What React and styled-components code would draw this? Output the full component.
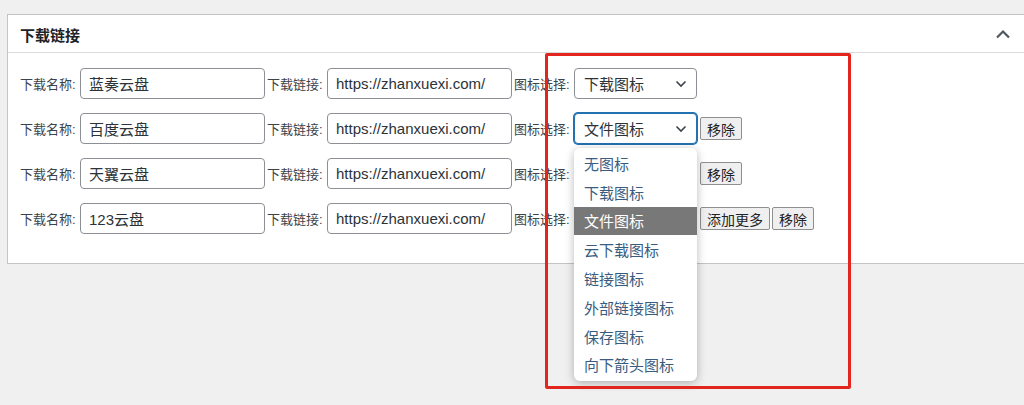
import React from "react";
import styled, { createGlobalStyle } from "styled-components";

const GlobalStyle = createGlobalStyle`
  html, body {
    margin: 0;
    padding: 0;
    background: #f0f0f1;
    overflow: hidden;
  }
  body {
    font-family: "Liberation Sans", "Noto Sans CJK SC", sans-serif;
    color: #3c434a;
  }
`;

const rows = [
  { name: "蓝奏云盘", icon: "下载图标", buttons: [] },
  { name: "百度云盘", icon: "文件图标", buttons: ["移除"], open: true },
  { name: "天翼云盘", icon: "下载图标", buttons: ["移除"], covered: true },
  { name: "123云盘", icon: "下载图标", buttons: ["添加更多", "移除"], covered: true },
];

const options = [
  "无图标",
  "下载图标",
  "文件图标",
  "云下载图标",
  "链接图标",
  "外部链接图标",
  "保存图标",
  "向下箭头图标",
];

const App = () => {
  return (
    <Page>
      <GlobalStyle />
      <Panel>
        <PanelHeader>
          <Title>下载链接</Title>
          <Toggle>
            <svg width="16" height="10" viewBox="0 0 16 10">
              <path
                d="M2 8.5 L8 2.5 L14 8.5"
                fill="none"
                stroke="#50575e"
                strokeWidth="2.2"
              />
            </svg>
          </Toggle>
        </PanelHeader>
        <PanelBody>
          {rows.map((row, i) => (
            <Row key={i}>
              <Label>下载名称:</Label>
              <TextInput readOnly value={row.name} />
              <Label>下载链接:</Label>
              <TextInput readOnly value="https://zhanxuexi.com/" />
              <Label>图标选择:</Label>
              <SelectWrap>
                <Select $focused={row.open} $covered={row.covered}>
                  <span>{row.icon}</span>
                  <svg width="12" height="8" viewBox="0 0 12 8">
                    <path
                      d="M1.5 1.5 L6 6 L10.5 1.5"
                      fill="none"
                      stroke="#3c434a"
                      strokeWidth="1.6"
                    />
                  </svg>
                </Select>
                {row.open && (
                  <Menu>
                    {options.map((o) => (
                      <MenuItem key={o} $active={o === row.icon}>
                        {o}
                      </MenuItem>
                    ))}
                  </Menu>
                )}
              </SelectWrap>
              {row.buttons.map((b) => (
                <Button key={b}>{b}</Button>
              ))}
            </Row>
          ))}
        </PanelBody>
      </Panel>
      <Highlight />
    </Page>
  );
};

export default App;

const Page = styled.div`
  position: relative;
  width: 1024px;
  height: 405px;
  padding-top: 14px;
  box-sizing: border-box;
`;

const Panel = styled.div`
  margin-left: 7px;
  margin-right: -20px;
  background: #fff;
  border: 1px solid #c3c4c7;
`;

const PanelHeader = styled.div`
  height: 37px;
  display: flex;
  align-items: center;
  justify-content: space-between;
  border-bottom: 1px solid #dcdcde;
  padding: 0 32px 0 12px;
`;

const Title = styled.h2`
  margin: 0;
  font-size: 15px;
  font-weight: 700;
  color: #1d2327;
  padding-top: 1px;
`;

const Toggle = styled.div`
  display: flex;
  align-items: center;
`;

const PanelBody = styled.div`
  display: flex;
  flex-direction: column;
  gap: 14px;
  padding: 15px 12px 29px;
`;

const Row = styled.div`
  display: flex;
  align-items: center;
  gap: 2px;
  height: 31px;
`;

const Label = styled.span`
  font-size: 13px;
  color: #3c434a;
  width: 58px;
  white-space: nowrap;
`;

const TextInput = styled.input`
  width: 185px;
  height: 31px;
  box-sizing: border-box;
  border: 1px solid #8c8f94;
  border-radius: 4px;
  padding: 0 8px;
  font-family: "Liberation Sans", "Noto Sans CJK SC", sans-serif;
  font-size: 15px;
  color: #2c3338;
  background: #fff;
  outline: none;
`;

const SelectWrap = styled.div`
  position: relative;
  margin-right: 1px;
`;

const Select = styled.div`
  width: 123px;
  height: 31px;
  box-sizing: border-box;
  display: flex;
  align-items: center;
  justify-content: space-between;
  padding: 0 9px;
  border: 1px solid ${(p) => (p.$focused ? "#2271b1" : "#8c8f94")};
  box-shadow: ${(p) => (p.$focused ? "0 0 0 1px #2271b1" : "none")};
  border-radius: 4px;
  font-size: 15px;
  color: #2c3338;
  background: #fff;
  visibility: ${(p) => (p.$covered ? "hidden" : "visible")};
`;

const Menu = styled.div`
  position: absolute;
  top: 35px;
  left: 0;
  width: 123px;
  padding: 1px 0 2px;
  background: #fff;
  border-radius: 6px;
  box-shadow: 0 2px 10px rgba(0, 0, 0, 0.28);
  z-index: 5;
`;

const MenuItem = styled.div`
  height: 28.8px;
  display: flex;
  align-items: center;
  padding-left: 10px;
  font-size: 15px;
  color: ${(p) => (p.$active ? "#fff" : "#3a5d7f")};
  background: ${(p) => (p.$active ? "#787878" : "transparent")};
`;

const Button = styled.button`
  height: 23px;
  padding: 0 6px;
  font-family: "Liberation Sans", "Noto Sans CJK SC", sans-serif;
  font-size: 14px;
  color: #1d2327;
  background: #efefef;
  border: 1px solid #8f8f8f;
  border-radius: 2px;
`;

const Highlight = styled.div`
  position: absolute;
  left: 545px;
  top: 53px;
  width: 300px;
  height: 330px;
  border: 3px solid #e3261d;
  border-radius: 2px;
  pointer-events: none;
  z-index: 10;
`;
